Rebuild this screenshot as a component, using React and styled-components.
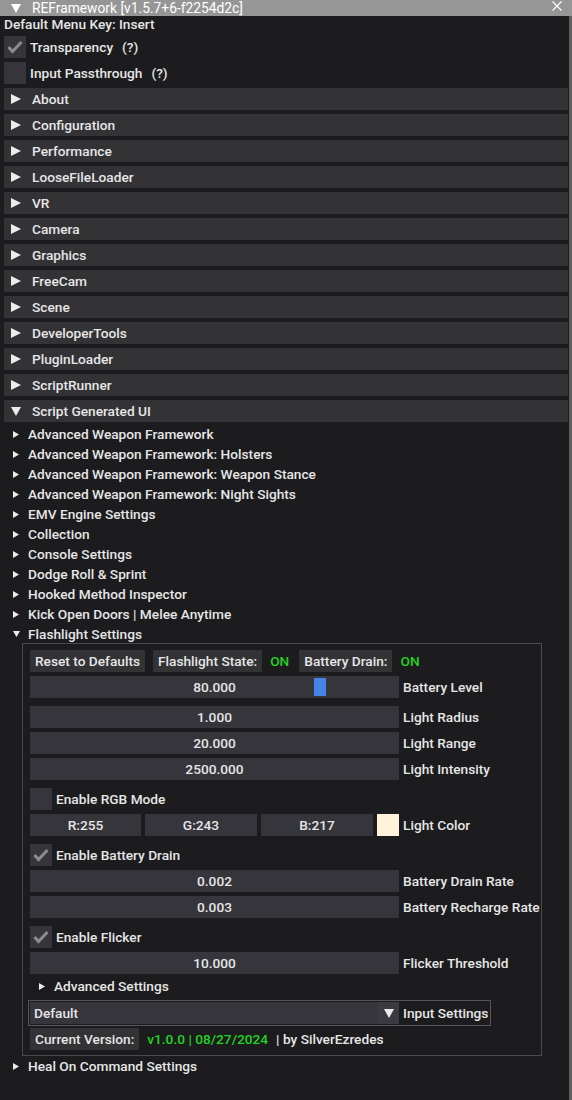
import React from 'react';
import styled, { createGlobalStyle } from 'styled-components';

const Global = createGlobalStyle`
  html, body { margin: 0; padding: 0; background: #1c1c1e; }
  body {
    font-family: Roboto, "Noto Sans", "Liberation Sans", sans-serif;
    font-size: 13.7px;
    font-weight: 500;
    color: #e6e6e6;
  }
  * { box-sizing: border-box; }
`;

const Window = styled.div`
  width: 572px;
  min-height: 1100px;
  display: flex;
  flex-direction: column;
  background: #1c1c1e;
`;

const TitleBar = styled.div`
  height: 16px;
  background: #969696;
  display: flex;
  align-items: center;
  padding: 0 10px 0 11px;
  gap: 11px;
  color: #ffffff;
  font-weight: 400;
  font-size: 13.8px;
  line-height: 16px;
`;

const TitleText = styled.span`
  flex: 1;
  white-space: nowrap;
`;

const Body = styled.div`
  flex: 1;
  display: flex;
  flex-direction: column;
  padding: 0 1px 0 4px;
  border-right: 3px solid #5e5e5e;
`;

const TextLine = styled.div`
  height: 16px;
  line-height: 16px;
  white-space: nowrap;
`;

const CheckRow = styled.div`
  display: flex;
  align-items: center;
  gap: 4px;
  height: 22px;
  margin-top: ${p => p.$mt ?? 4}px;
  white-space: nowrap;
`;

const Box = styled.div`
  width: 22px;
  height: 22px;
  background: #35353b;
  display: flex;
  align-items: center;
  justify-content: center;
  flex: none;
`;

const Help = styled.span`
  margin-left: 5px;
`;

const Header = styled.div`
  height: 22px;
  margin-top: 4px;
  background: #333336;
  display: flex;
  align-items: center;
  padding-left: 7px;
  gap: 11px;
  white-space: nowrap;
`;

const TreeRow = styled.div`
  height: 20px;
  margin-top: ${p => p.$mt ?? 0}px;
  display: flex;
  align-items: center;
  padding-left: ${p => p.$pl ?? 9}px;
  gap: ${p => p.$gap ?? 9}px;
  white-space: nowrap;
`;

const TreeList = styled.div`
  display: flex;
  flex-direction: column;
  margin-top: 2px;
`;

const Child = styled.div`
  margin: -1px 0 0 18px;
  width: 520px;
  border: 1px solid #4a4a4e;
  padding: 6px 7px 5px 7px;
  display: flex;
  flex-direction: column;
`;

const Row = styled.div`
  display: flex;
  align-items: center;
  gap: ${p => p.$gap ?? 4}px;
  height: 22px;
  margin-top: ${p => p.$mt ?? 4}px;
  white-space: nowrap;
`;

const Button = styled.div`
  height: 22px;
  padding: 0 5px;
  display: flex;
  align-items: center;
  background: #333336;
`;

const Green = styled.span`
  color: #22d322;
  margin-right: ${p => p.$mr ?? 0}px;
`;

const Slider = styled.div`
  position: relative;
  width: ${p => p.$w ?? 369}px;
  height: 22px;
  background: #35353b;
  display: flex;
  align-items: center;
  justify-content: center;
  flex: none;
`;

const Grab = styled.div`
  position: absolute;
  top: 2px;
  bottom: 2px;
  width: 12px;
  background: #4285e6;
`;

const SliderValue = styled.span`
  position: relative;
`;

const Label = styled.span`
  margin-left: ${p => p.$ml ?? 0}px;
`;

const Swatch = styled.div`
  width: 22px;
  height: 22px;
  background: #fff3d9;
  flex: none;
`;

const ComboFrame = styled.div`
  display: flex;
  align-items: center;
  gap: 4px;
  margin: 4px 0 0 -2px;
  padding: 1px 2px 1px 1px;
  border: 1px solid #55555a;
  align-self: flex-start;
  white-space: nowrap;
`;

const Combo = styled.div`
  width: 369px;
  height: 22px;
  background: #35353b;
  display: flex;
  align-items: center;
  padding-left: 4px;
`;

const ComboText = styled.span`
  flex: 1;
`;

const ComboArrow = styled.div`
  width: 21px;
  height: 22px;
  background: #3a3a41;
  display: flex;
  align-items: center;
  justify-content: center;
`;

const Check = () => (
  <svg width="22" height="22" viewBox="0 0 22 22">
    <polyline points="4.5,11 8.5,15.5 17.5,6" fill="none" stroke="#8c8c8e" strokeWidth="3" />
  </svg>
);

const TriRight = ({ w = 10, h = 10 }) => (
  <svg width={w} height={h} viewBox={`0 0 ${w} ${h}`} style={{ flex: 'none' }}>
    <polygon points={`0,0 ${w},${h / 2} 0,${h}`} fill="#ececec" />
  </svg>
);

const TriDown = ({ w = 10, h = 9, color = '#ececec' }) => (
  <svg width={w} height={h} viewBox={`0 0 ${w} ${h}`} style={{ flex: 'none' }}>
    <polygon points={`0,0 ${w},0 ${w / 2},${h}`} fill={color} />
  </svg>
);

const CloseX = () => (
  <svg width="10" height="10" viewBox="0 0 10 10" style={{ flex: 'none', marginTop: '-5px' }}>
    <path d="M0.5 0.5 L9.5 9.5 M9.5 0.5 L0.5 9.5" stroke="#ffffff" strokeWidth="1.2" />
  </svg>
);

const headers = [
  'About', 'Configuration', 'Performance', 'LooseFileLoader', 'VR', 'Camera',
  'Graphics', 'FreeCam', 'Scene', 'DeveloperTools', 'PluginLoader', 'ScriptRunner',
];

const trees = [
  'Advanced Weapon Framework',
  'Advanced Weapon Framework: Holsters',
  'Advanced Weapon Framework: Weapon Stance',
  'Advanced Weapon Framework: Night Sights',
  'EMV Engine Settings',
  'Collection',
  'Console Settings',
  'Dodge Roll & Sprint',
  'Hooked Method Inspector',
  'Kick Open Doors | Melee Anytime',
];

const SliderRow = ({ value, label, mt, grab }) => (
  <Row $mt={mt}>
    <Slider>
      {grab != null && <Grab style={{ left: `${2 + grab * 353}px` }} />}
      <SliderValue>{value}</SliderValue>
    </Slider>
    <Label>{label}</Label>
  </Row>
);

export default function App() {
  return (
    <Window>
      <Global />
      <TitleBar>
        <TriDown w={10} h={9} color="#ffffff" />
        <TitleText>REFramework [v1.5.7+6-f2254d2c]</TitleText>
        <CloseX />
      </TitleBar>
      <Body>
        <TextLine>Default Menu Key: Insert</TextLine>
        <CheckRow>
          <Box><Check /></Box>
          <span>Transparency</span>
          <Help>(?)</Help>
        </CheckRow>
        <CheckRow>
          <Box />
          <span>Input Passthrough</span>
          <Help>(?)</Help>
        </CheckRow>
        {headers.map(h => (
          <Header key={h}>
            <TriRight w={10} h={10} />
            <span>{h}</span>
          </Header>
        ))}
        <Header>
          <TriDown w={10} h={9} />
          <span>Script Generated UI</span>
        </Header>
        <TreeList>
          {trees.map(t => (
            <TreeRow key={t}>
              <TriRight w={6} h={7} />
              <span>{t}</span>
            </TreeRow>
          ))}
          <TreeRow $pl={9} $gap={8}>
            <TriDown w={7} h={6} />
            <span>Flashlight Settings</span>
          </TreeRow>
        </TreeList>
        <Child>
          <Row $mt={0} $gap={8}>
            <Button>Reset to Defaults</Button>
            <Button>Flashlight State:</Button>
            <Green $mr={2}>ON</Green>
            <Button>Battery Drain:</Button>
            <Green>ON</Green>
          </Row>
          <SliderRow value="80.000" label="Battery Level" mt={4} grab={0.8} />
          <SliderRow value="1.000" label="Light Radius" mt={8} />
          <SliderRow value="20.000" label="Light Range" />
          <SliderRow value="2500.000" label="Light Intensity" />
          <CheckRow $mt={8}>
            <Box />
            <span>Enable RGB Mode</span>
          </CheckRow>
          <Row>
            <Slider $w={111}>R:255</Slider>
            <Slider $w={112}>G:243</Slider>
            <Slider $w={112}>B:217</Slider>
            <Swatch />
            <Label>Light Color</Label>
          </Row>
          <CheckRow $mt={8}>
            <Box><Check /></Box>
            <span>Enable Battery Drain</span>
          </CheckRow>
          <SliderRow value="0.002" label="Battery Drain Rate" />
          <SliderRow value="0.003" label="Battery Recharge Rate" />
          <CheckRow $mt={8}>
            <Box><Check /></Box>
            <span>Enable Flicker</span>
          </CheckRow>
          <SliderRow value="10.000" label="Flicker Threshold" />
          <TreeRow $mt={2}>
            <TriRight w={6} h={7} />
            <span>Advanced Settings</span>
          </TreeRow>
          <ComboFrame>
            <Combo>
              <ComboText>Default</ComboText>
              <ComboArrow><TriDown w={10} h={9} /></ComboArrow>
            </Combo>
            <Label>Input Settings</Label>
          </ComboFrame>
          <Row $mt={2} $gap={8}>
            <Button>Current Version:</Button>
            <Green>v1.0.0 | 08/27/2024</Green>
            <span>| by SilverEzredes</span>
          </Row>
        </Child>
        <TreeRow>
          <TriRight w={6} h={7} />
          <span>Heal On Command Settings</span>
        </TreeRow>
      </Body>
    </Window>
  );
}
